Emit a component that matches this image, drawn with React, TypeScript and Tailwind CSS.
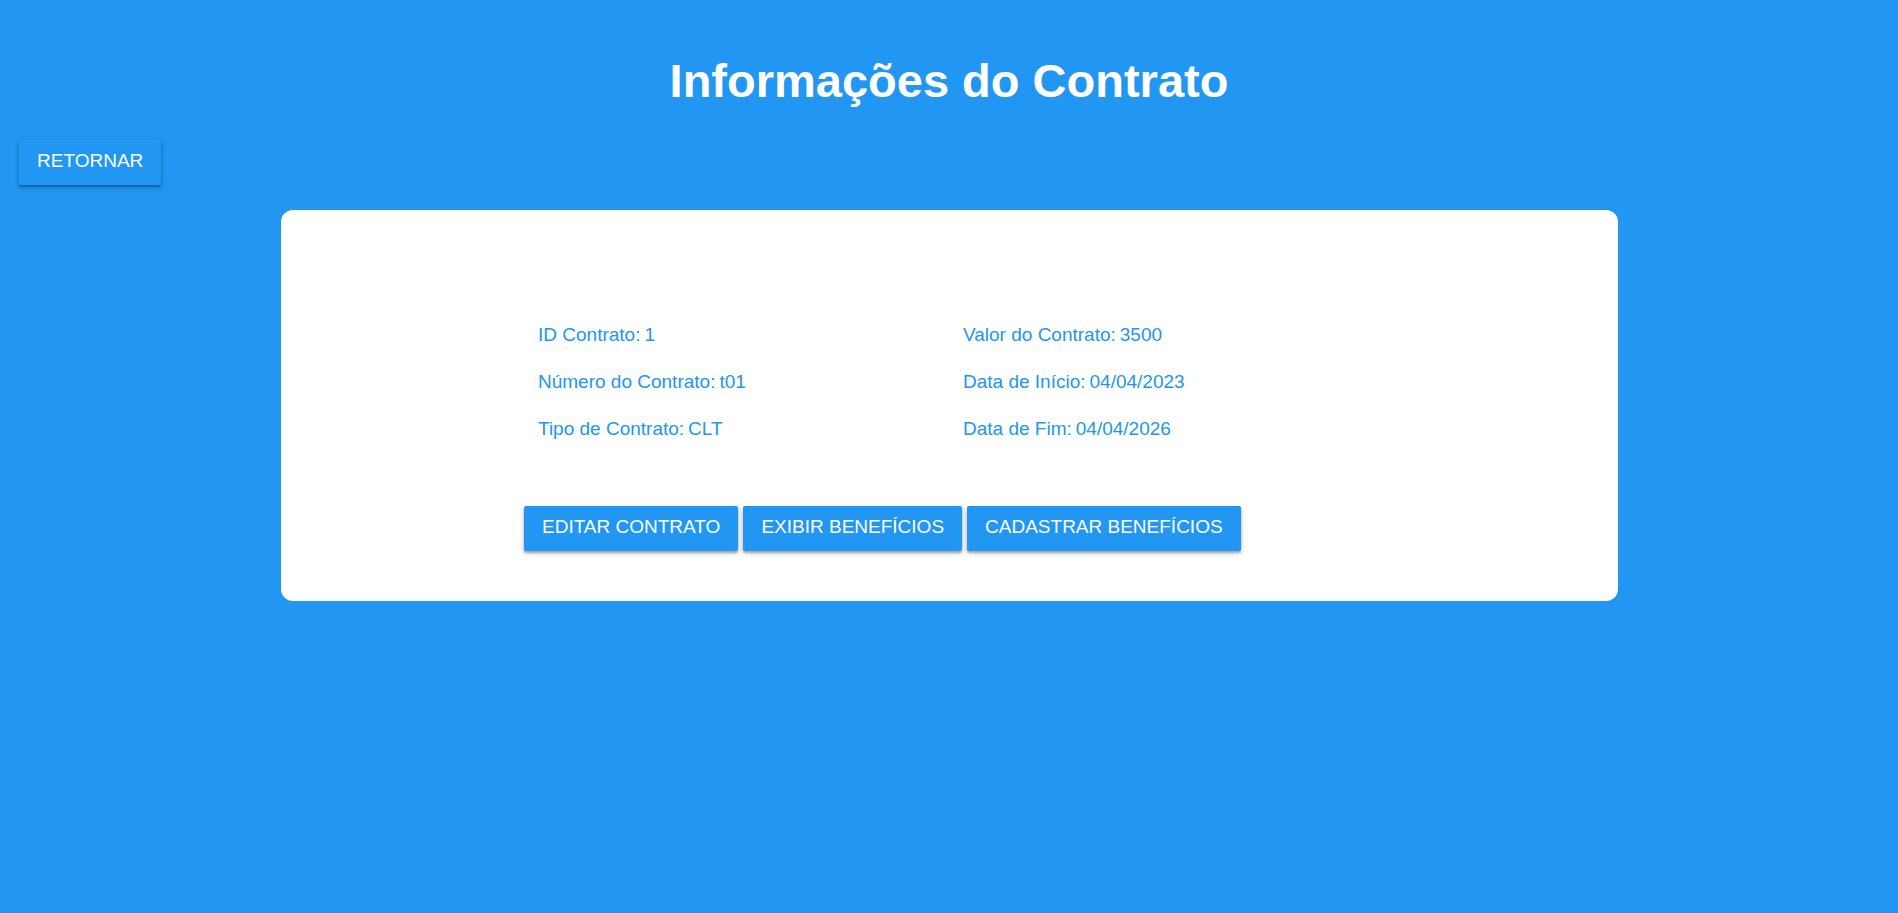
import type { ReactNode } from "react";

const fields: [string, string][] = [
  ["ID Contrato", "1"],
  ["Valor do Contrato", "3500"],
  ["Número do Contrato", "t01"],
  ["Data de Início", "04/04/2023"],
  ["Tipo de Contrato", "CLT"],
  ["Data de Fim", "04/04/2026"],
];

function Button({ children }: { children: ReactNode }) {
  return (
    <button
      type="button"
      className="h-[45px] cursor-pointer rounded-xs bg-[#2196f3] px-[18px] pb-[3px] text-[19px] leading-5 whitespace-nowrap text-white uppercase shadow-[0_2px_5px_0_rgba(0,0,0,0.26),0_2px_2px_0_rgba(0,0,0,0.2)]"
    >
      {children}
    </button>
  );
}

export default function App() {
  return (
    <main className="min-h-screen bg-[#2196f3] pt-[51px] font-['Liberation_Sans',Arial,sans-serif]">
      <h1 className="text-center text-[47px] leading-[60px] font-bold text-white">
        Informações do Contrato
      </h1>
      <nav className="mt-[29px] flex px-[19px]">
        <Button>Retornar</Button>
      </nav>
      <section className="mx-auto mt-[25px] w-full max-w-[1337px] rounded-xl bg-white pt-[101px] pb-[50px]">
        <div className="mx-auto w-full max-w-[850px]">
          <dl className="grid grid-cols-2 text-[19px] leading-[47px] text-[#2196f3]">
            {fields.map(([label, value]) => (
              <div key={label} className="flex gap-1 px-[14px]">
                <dt>{label}:</dt>
                <dd>{value}</dd>
              </div>
            ))}
          </dl>
          <div className="mt-[54px] flex flex-wrap gap-[5px]">
            <Button>Editar Contrato</Button>
            <Button>Exibir Benefícios</Button>
            <Button>Cadastrar Benefícios</Button>
          </div>
        </div>
      </section>
    </main>
  );
}
